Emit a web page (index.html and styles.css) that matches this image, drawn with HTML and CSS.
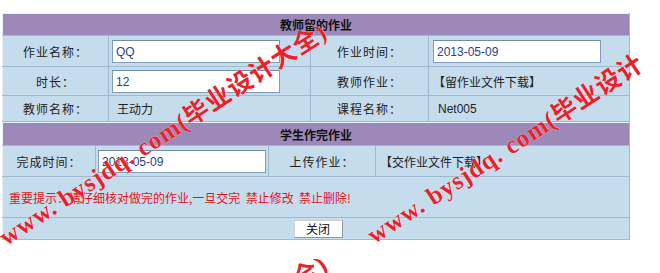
FILE: index.html
```html
<!DOCTYPE html>
<html lang="zh-cn">
<head>
    <meta charset="UTF-8">
    <title>教师留的作业</title>
    <link rel="stylesheet" href="styles.css">
</head>
<body>
    <div class="page">
        <table class="grid first">
            <colgroup>
                <col class="c1">
                <col class="c2">
                <col class="c3">
                <col>
            </colgroup>
            <tr>
                <th colspan="4" class="title">教师留的作业</th>
            </tr>
            <tr class="row-a">
                <td class="label">作业名称：</td>
                <td class="value"><input type="text" class="field" value="QQ"></td>
                <td class="label">作业时间：</td>
                <td class="value wide"><input type="text" class="field" value="2013-05-09"></td>
            </tr>
            <tr class="row-b">
                <td class="label">时长：</td>
                <td class="value"><input type="text" class="field" value="12"></td>
                <td class="label">教师作业：</td>
                <td class="value wide">【留作业文件下载】</td>
            </tr>
            <tr class="row-c">
                <td class="label">教师名称：</td>
                <td class="value text">王动力</td>
                <td class="label">课程名称：</td>
                <td class="value text wide">Net005</td>
            </tr>
        </table>
        <table class="grid second">
            <colgroup>
                <col class="c1">
                <col class="c2">
                <col class="c3">
                <col>
            </colgroup>
            <tr>
                <th colspan="4" class="title">学生作完作业</th>
            </tr>
            <tr class="row-a">
                <td class="label">完成时间：</td>
                <td class="value tight"><input type="text" class="field" value="2013-05-09"></td>
                <td class="label">上传作业：</td>
                <td class="value wide">【交作业文件下载】</td>
            </tr>
            <tr class="row-notice">
                <td colspan="4" class="notice">重要提示：请仔细核对做完的作业,一旦交完&nbsp; 禁止修改&nbsp; 禁止删除!</td>
            </tr>
            <tr class="row-btn">
                <td colspan="4" class="actions"><button class="close-btn">关闭</button></td>
            </tr>
        </table>

        <!-- 水印 -->
        <div class="mark mark-1">www. bysjdq. com(毕业设计大全)</div>
        <div class="mark mark-2">www. bysjdq. com(毕业设计</div>
        <div class="mark mark-3">全)</div>
    </div>
</body>
</html>
```
FILE: styles.css
```css
body {
    margin: 0;
    background: #fff;
    font-family: "Noto Sans CJK SC", "DejaVu Sans", sans-serif;
    font-size: 12px;
    color: #222;
}
.page {
    position: relative;
    width: 660px;
    height: 273px;
    overflow: hidden;
    padding-top: 13px;
    box-sizing: border-box;
}
.grid {
    width: 628px;
    margin-left: 2px;
    border-collapse: collapse;
    table-layout: fixed;
    background: #c5dced;
}
.first .c1 { width: 106px; }
.first .c2 { width: 202px; }
.first .c3 { width: 118px; }
.second .c1 { width: 93px; }
.second .c2 { width: 173px; }
.second .c3 { width: 107px; }
.grid td, .grid th {
    padding: 0;
    border: 1px solid #eaf2f9;
    border-right-color: #9fb9cf;
    border-bottom-color: #9fb9cf;
}
.title {
    background: #9c88b9;
    height: 21px;
    font-weight: bold;
    font-size: 12px;
    color: #111;
}
.label {
    text-align: center;
    letter-spacing: 1px;
}
.grid .value {
    padding-left: 3px;
}
.grid .value.wide {
    padding-left: 4px;
}
.grid .value.tight {
    padding-left: 2px;
}
.grid .value.text {
    padding-left: 8px;
}
.grid .value.text.wide {
    padding-left: 9px;
    font-family: "Liberation Sans", Arial, sans-serif;
}
.row-a td { height: 30px; }
.row-b td { height: 28px; }
.row-c td { height: 25px; }
.second .title { height: 22px; }
.row-notice td { height: 40px; }
.row-btn td { height: 21px; }
.field {
    display: block;
    width: 168px;
    height: 23px;
    box-sizing: border-box;
    border: 1px solid #7f9db9;
    border-top-color: #6f8ca8;
    padding: 2px 3px 0;
    font-family: "Liberation Sans", Arial, sans-serif;
    font-size: 12px;
    color: #2b3f7a;
    background: #fff;
}
.grid .notice {
    color: #e3161b;
    padding-left: 6px;
}
.actions {
    text-align: center;
}
.close-btn {
    width: 49px;
    height: 18px;
    padding: 0;
    font-family: "Noto Sans CJK SC", sans-serif;
    font-size: 12px;
    line-height: 16px;
    color: #111;
    background: #fff;
    border: 1px solid #8a9aa8;
    border-top-color: #c8d0d8;
    border-left-color: #c8d0d8;
    margin-left: 4px;
}
.mark {
    position: absolute;
    font-family: "Liberation Serif", "Noto Sans CJK SC", serif;
    font-weight: bold;
    font-size: 25px;
    line-height: 30px;
    letter-spacing: 1px;
    color: #e8212a;
    white-space: nowrap;
    transform-origin: left bottom;
    transform: rotate(-33deg);
    text-shadow: 0 0 1px #fff;
    pointer-events: none;
}
.mark-1 { left: 10px; top: 222px; }
.mark-2 { left: 378px; top: 220px; }
.mark-3 { left: 304px; top: 264px; }
```
